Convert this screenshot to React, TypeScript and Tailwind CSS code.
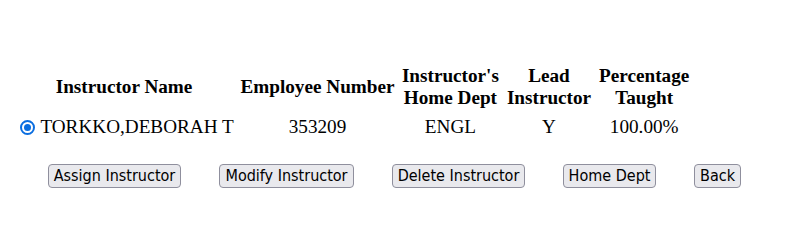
import React from "react";

const headers = [
  ["Instructor Name"],
  ["Employee Number"],
  ["Instructor's", "Home Dept"],
  ["Lead", "Instructor"],
  ["Percentage", "Taught"],
];

const buttons = [
  { label: "Assign Instructor", w: "w-[133px]" },
  { label: "Modify Instructor", w: "w-[135px]" },
  { label: "Delete Instructor", w: "w-[133px]" },
  { label: "Home Dept", w: "w-[93px]" },
  { label: "Back", w: "w-[47px]" },
];

export default function App() {
  return (
    <div className="w-[802px] h-[243px] bg-white text-black overflow-hidden font-['Liberation_Serif','Times_New_Roman',serif] text-[19.2px] leading-[22px]">
      <div className="pt-[61px] pl-[10px]">
        <table className="border-separate border-spacing-[2.4px]">
          <thead>
            <tr>
              {headers.map((h, i) => (
                <th key={i} className={`py-[2.4px] ${i > 1 ? "px-[3px]" : "px-[2.4px]"} font-bold text-center align-middle`}>
                  {h.map((line, j) => (
                    <div key={j}>{line}</div>
                  ))}
                </th>
              ))}
            </tr>
          </thead>
          <tbody>
            <tr>
              <td className="p-[2.4px] whitespace-nowrap">
                <span className="inline-flex items-center align-[2.5px] ml-[6px] mr-[5px]">
                  <span className="w-[15px] h-[15px] rounded-full border-[2px] border-[#0b6ee0] bg-white flex items-center justify-center">
                    <span className="w-[7px] h-[7px] rounded-full bg-[#0b6ee0]" />
                  </span>
                </span>
                TORKKO,DEBORAH T
              </td>
              <td className="p-[2.4px] text-center">353209</td>
              <td className="py-[2.4px] px-[3px] text-center">ENGL</td>
              <td className="py-[2.4px] px-[3px] text-center">Y</td>
              <td className="py-[2.4px] px-[3px] text-center">100.00%</td>
            </tr>
          </tbody>
        </table>
        <div className="flex gap-[38px] pl-[38px] mt-[21px]">
          {buttons.map((b) => (
            <button
              key={b.label}
              className={`${b.w} h-[24px] flex items-center justify-center rounded-[4px] border border-[#8f8f9d] bg-[#e9e9ed] text-[16px] leading-none text-black font-['DejaVu_Sans_Condensed','DejaVu_Sans',sans-serif] whitespace-nowrap`}
            >
              {b.label}
            </button>
          ))}
        </div>
      </div>
    </div>
  );
}
